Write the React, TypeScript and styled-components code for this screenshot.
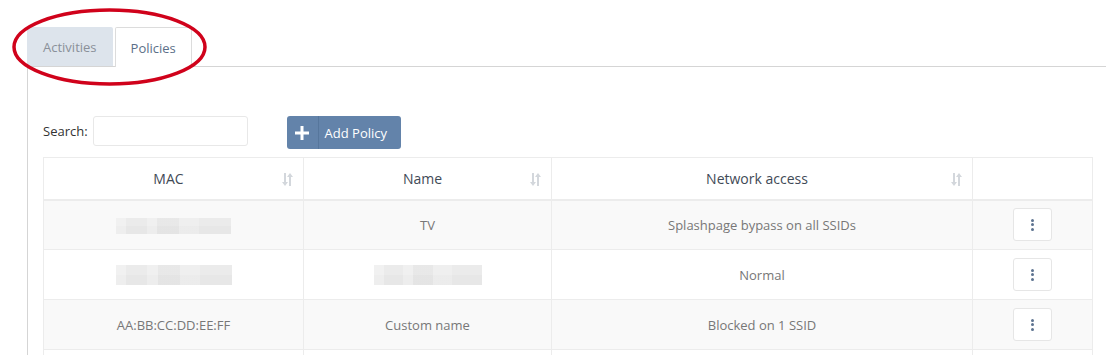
import React from "react";
import styled, { createGlobalStyle } from "styled-components";

const Global = createGlobalStyle`
  html, body { margin: 0; padding: 0; background: #fff; }
  body { font-family: "Open Sans", "Liberation Sans", sans-serif; font-size: 13px; color: #333; }
  * { box-sizing: border-box; }
`;

const Page = styled.div`
  position: relative;
  width: 1106px;
  height: 355px;
  overflow: hidden;
  padding: 27px 0 0 27px;
`;

const TabList = styled.div`
  display: flex;
  gap: 2px;
  border-bottom: 1px solid #d5d5d5;
  height: 40px;
`;

const Tab = styled.div<{ $active?: boolean }>`
  height: ${(p) => (p.$active ? "40px" : "39px")};
  padding: 0 ${(p) => (p.$active ? "15px" : "16px")};
  display: flex;
  align-items: center;
  font-size: 13px;
  border-radius: 2px 2px 0 0;
  color: ${(p) => (p.$active ? "#5b6f88" : "#8a9099")};
  background: ${(p) => (p.$active ? "#fff" : "#dde4ec")};
  border: ${(p) => (p.$active ? "1px solid #dcdcdc" : "none")};
  border-bottom: none;
  position: relative;
  z-index: 1;
`;

const Panel = styled.div`
  border-left: 1px solid #d5d5d5;
  padding: 49px 14px 0 15px;
  height: 300px;
`;

const Toolbar = styled.div`
  display: flex;
  align-items: flex-start;
  height: 32px;
  margin-bottom: 9px;
`;

const SearchLabel = styled.label`
  display: flex;
  align-items: center;
  gap: 5px;
  height: 30px;
  color: #333;
  font-size: 13px;
`;

const SearchInput = styled.input`
  width: 155px;
  height: 30px;
  border: 1px solid #e8e8e8;
  border-radius: 3px;
  outline: none;
`;

const AddButton = styled.button`
  margin-left: 39px;
  height: 33px;
  width: 114px;
  background: #6383aa;
  border: none;
  border-radius: 3px;
  color: #fff;
  font-family: "Open Sans", "Liberation Sans", sans-serif;
  font-size: 13px;
  display: flex;
  align-items: center;
  padding: 0;
`;

const ButtonIcon = styled.span`
  width: 32px;
  height: 33px;
  display: flex;
  align-items: center;
  justify-content: center;
  border-right: 1px solid #56769c;
`;

const ButtonText = styled.span`
  padding-left: 6px;
`;

const Table = styled.table`
  width: 1049px;
  border-collapse: collapse;
  table-layout: fixed;
  border: 1px solid #ececec;
`;

const Th = styled.th`
  height: 42px;
  border: 1px solid #ececec;
  border-bottom: 2px solid #ececec;
  font-weight: 500;
  color: #3f4a56;
  font-size: 14px;
  position: relative;
  text-align: center;
  padding: 0 10px 0 0;
`;

const SortIcon = styled.span`
  position: absolute;
  right: 9px;
  top: 15px;
  display: flex;
`;

const Tr = styled.tr<{ $odd?: boolean }>`
  background: ${(p) => (p.$odd ? "#f9f9f9" : "#fff")};
`;

const Td = styled.td`
  height: 50px;
  border: 1px solid #ececec;
  text-align: center;
  color: #777;
  font-size: 13px;
  padding: 0;
  vertical-align: middle;
`;

const Blur = styled.div<{ $w: number; $h: number }>`
  display: inline-block;
  width: ${(p) => p.$w}px;
  height: ${(p) => p.$h}px;
  vertical-align: middle;
  background:
    linear-gradient(90deg, rgba(255,255,255,0.3) 0 9%, rgba(0,0,0,0) 9% 27%, rgba(255,255,255,0.25) 27% 36%, rgba(0,0,0,0.01) 36% 55%, rgba(255,255,255,0.2) 55% 72%, rgba(0,0,0,0) 72%),
    linear-gradient(180deg, #ebebeb 0 50%, #e7e7e7 50%);
`;

const ActionButton = styled.div`
  width: 39px;
  height: 33px;
  margin: 0 auto;
  border: 1px solid #e6e6e6;
  border-radius: 3px;
  background: #fff;
  display: flex;
  flex-direction: column;
  align-items: center;
  justify-content: center;
  gap: 1.5px;
`;

const Dot = styled.span`
  width: 3px;
  height: 3px;
  border-radius: 50%;
  background: #5d7390;
`;

const Annotation = styled.svg`
  position: absolute;
  left: 0;
  top: 0;
  pointer-events: none;
  z-index: 5;
`;

const Sort = () => (
  <SortIcon>
    <svg width="12" height="13" viewBox="0 0 12 13">
      <path d="M2 0h2v9h2L3 13 0 9h2z" fill="#d3d7dc" />
      <path d="M9 13h-2V4H5l3-4 3 4H9z" fill="#d3d7dc" />
    </svg>
  </SortIcon>
);

const Actions = () => (
  <ActionButton>
    <Dot />
    <Dot />
    <Dot />
  </ActionButton>
);

export default function App() {
  return (
    <>
      <Global />
      <Page>
        <TabList>
          <Tab>Activities</Tab>
          <Tab $active>Policies</Tab>
        </TabList>
        <Panel>
          <Toolbar>
            <SearchLabel>
              Search:
              <SearchInput />
            </SearchLabel>
            <AddButton>
              <ButtonIcon>
                <svg width="14" height="14" viewBox="0 0 14 14">
                  <path d="M5.5 0h3v5.5H14v3H8.5V14h-3V8.5H0v-3h5.5z" fill="#fff" />
                </svg>
              </ButtonIcon>
              <ButtonText>Add Policy</ButtonText>
            </AddButton>
          </Toolbar>
          <Table>
            <colgroup>
              <col style={{ width: 260 }} />
              <col style={{ width: 248 }} />
              <col style={{ width: 421 }} />
              <col style={{ width: 120 }} />
            </colgroup>
            <thead>
              <tr>
                <Th>MAC<Sort /></Th>
                <Th>Name<Sort /></Th>
                <Th>Network access<Sort /></Th>
                <Th />
              </tr>
            </thead>
            <tbody>
              <Tr $odd>
                <Td><Blur $w={115} $h={16} /></Td>
                <Td>TV</Td>
                <Td>Splashpage bypass on all SSIDs</Td>
                <Td><Actions /></Td>
              </Tr>
              <Tr>
                <Td><Blur $w={116} $h={20} /></Td>
                <Td><Blur $w={108} $h={20} /></Td>
                <Td>Normal</Td>
                <Td><Actions /></Td>
              </Tr>
              <Tr $odd>
                <Td>AA:BB:CC:DD:EE:FF</Td>
                <Td>Custom name</Td>
                <Td>Blocked on 1 SSID</Td>
                <Td><Actions /></Td>
              </Tr>
              <Tr>
                <Td />
                <Td />
                <Td />
                <Td />
              </Tr>
            </tbody>
          </Table>
        </Panel>
        <Annotation width="240" height="100" viewBox="0 0 240 100">
          <ellipse cx="109.5" cy="47" rx="95.5" ry="37" fill="none" stroke="#d0021b" strokeWidth="3.5" />
        </Annotation>
      </Page>
    </>
  );
}
